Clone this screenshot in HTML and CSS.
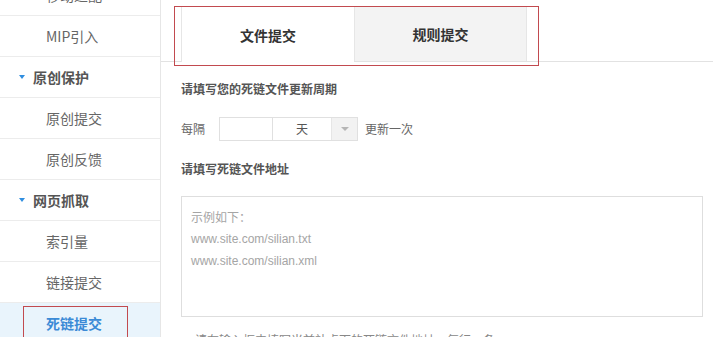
FILE: index.html
```html
<!DOCTYPE html>
<html lang="zh-CN">
<head>
<meta charset="utf-8">
<title>死链提交</title>
<link rel="stylesheet" href="styles.css">
</head>
<body>
<div class="page">
  <aside class="sidebar">
    <ul class="menu">
      <li class="item">移动适配</li>
      <li class="item">MIP引入</li>
      <li class="group"><span class="caret"></span>原创保护</li>
      <li class="item">原创提交</li>
      <li class="item">原创反馈</li>
      <li class="group"><span class="caret"></span>网页抓取</li>
      <li class="item">索引量</li>
      <li class="item">链接提交</li>
      <li class="item active">死链提交<span class="mark mark-side"></span></li>
    </ul>
  </aside>
  <main class="main">
    <div class="tabs">
      <div class="tab tab-on">文件提交</div>
      <div class="tab">规则提交</div>
      <span class="mark mark-tabs"></span>
    </div>
    <section class="form">
      <h3 class="label">请填写您的死链文件更新周期</h3>
      <div class="period">
        <span class="txt">每隔</span>
        <span class="num"></span>
        <span class="select"><span class="sel-val">天</span><span class="sel-btn"><span class="tri"></span></span></span>
        <span class="txt">更新一次</span>
      </div>
      <h3 class="label">请填写死链文件地址</h3>
      <div class="area">
        <p>示例如下：</p>
        <p class="url">www.site.com/silian.txt</p>
        <p class="url">www.site.com/silian.xml</p>
      </div>
      <p class="tip">请在输入框中填写当前站点下的死链文件地址，每行一条</p>
    </section>
  </main>
</div>
</body>
</html>
```
FILE: styles.css
```css
* { box-sizing: border-box; }
html, body { margin: 0; padding: 0; background: #fff; overflow: hidden; }
body {
  font-family: "Noto Sans CJK SC", "Liberation Sans", sans-serif;
  color: #555;
  width: 713px;
  height: 337px;
}
.page { display: flex; height: 337px; }

.sidebar {
  width: 161px;
  flex: none;
  border-right: 1px solid #e6e6e6;
}
.menu {
  list-style: none;
  margin: -25px 0 0;
  padding: 0;
}
.menu li {
  position: relative;
  height: 41px;
  border-bottom: 1px solid #ececec;
  display: flex;
  align-items: center;
  font-size: 14px;
  line-height: 20px;
}
.item { padding-left: 46px; color: #666; }
.group { padding-left: 19px; font-weight: bold; color: #555; }
.caret {
  width: 0; height: 0;
  border-left: 3.5px solid transparent;
  border-right: 3.5px solid transparent;
  border-top: 4px solid #2f8ee0;
  margin-right: 8px;
}
.menu li.active {
  background: #e9f4fc;
  color: #3b8ad6;
  font-weight: bold;
}
.mark { position: absolute; border: 1px solid #c24a4f; pointer-events: none; }
.mark-side { left: 23px; top: 3px; width: 105px; height: 45px; }

.main { flex: 1; position: relative; }
.tabs {
  position: relative;
  display: flex;
  margin-top: 7px;
  padding-left: 20px;
  border-bottom: 1px solid #e2e2e2;
}
.tab {
  width: 173px;
  height: 54px;
  display: flex;
  align-items: center;
  justify-content: center;
  font-size: 14px;
  font-weight: bold;
  color: #333;
  background: #f3f3f3;
  border-left: 1px solid #e6e6e6;
  border-right: 1px solid #e6e6e6;
}
.tab-on { background: #fff; border-right: none; margin-bottom: -1px; height: 55px; }
.mark-tabs { left: 13px; top: -1px; width: 365px; height: 60px; }

.form { padding: 18px 10px 0 20px; }
.label {
  margin: 0;
  font-size: 12px;
  line-height: 18px;
  font-weight: bold;
  color: #555;
}
.period {
  display: flex;
  align-items: center;
  height: 24px;
  margin: 19px 0;
  font-size: 12px;
  color: #666;
}
.txt { line-height: 24px; }
.num {
  width: 54px; height: 24px;
  margin-left: 14px;
  border: 1px solid #e0e0e0;
}
.select {
  display: flex;
  width: 85px; height: 24px;
  border: 1px solid #e0e0e0;
  border-left: none;
  margin-right: 7px;
}
.sel-val { flex: 1; text-align: center; line-height: 22px; color: #555; }
.sel-btn {
  width: 26px;
  background: #f2f2f2;
  border-left: 1px solid #e6e6e6;
  display: flex; align-items: center; justify-content: center;
}
.tri {
  width: 0; height: 0;
  border-left: 4px solid transparent;
  border-right: 4px solid transparent;
  border-top: 4px solid #b5b5b5;
}
.area {
  margin-top: 18px;
  height: 121px;
  border: 1px solid #dedede;
  padding: 9px 9px;
  font-size: 12px;
  color: #a5a5a5;
}
.area p { margin: 0; line-height: 22px; }
.area .url { font-family: "Liberation Sans", sans-serif; }
.tip {
  margin: 14px 0 0 14px;
  font-size: 12px;
  color: #888;
  line-height: 18px;
}
```
